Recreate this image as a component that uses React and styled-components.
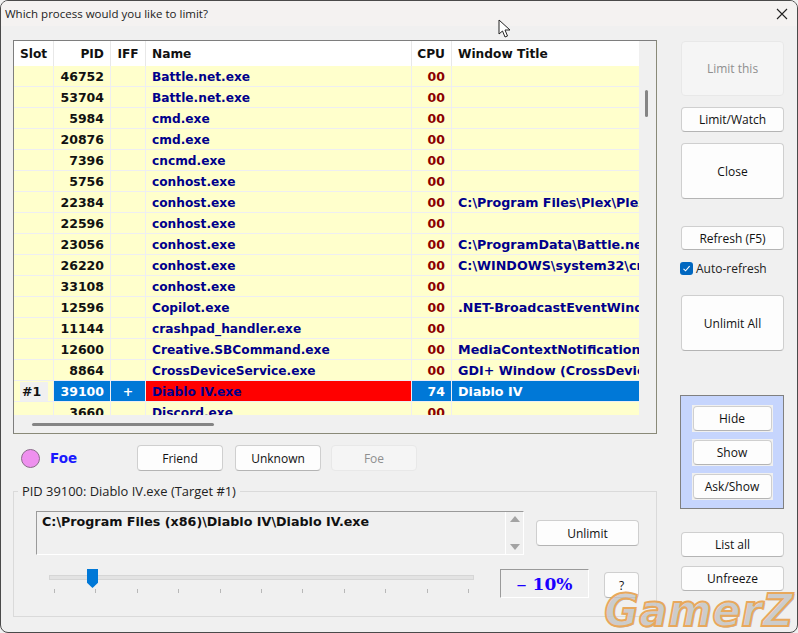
import React from 'react'
import styled, { createGlobalStyle } from 'styled-components'

const Global = createGlobalStyle`
    html, body {
        margin: 0;
        padding: 0;
        background: #f0f0f0;
    }
    body {
        font-family: "DejaVu Sans", sans-serif;
    }
`

const Window = styled.div`
    position: relative;
    width: 798px;
    height: 633px;
    box-sizing: border-box;
    overflow: hidden;
    background: #f0f0f0;
    border: 1px solid #4a4a4a;
    border-radius: 8px;
`

const TitleBar = styled.header`
    height: 25px;
    display: flex;
    align-items: center;
    justify-content: space-between;
    padding: 0 9px 0 4px;
    background: #f4f2f1;
    font: 11.5px "Open Sans", sans-serif;
    color: #222;
`

const Main = styled.div`
    display: grid;
    grid-template-columns: 644px 103px;
    column-gap: 24px;
    padding: 14px 0 0 12px;
`

const LeftColumn = styled.div`
    display: flex;
    flex-direction: column;
`

const RightColumn = styled.div`
    display: flex;
    flex-direction: column;
    padding-top: 1px;
`

const ListBox = styled.div`
    width: 644px;
    height: 394px;
    box-sizing: border-box;
    border: 1px solid;
    border-color: #7e7e7e #8a8a78 #8a8a78 #7e7e7e;
    background: #f0f0f0;
    display: grid;
    grid-template-columns: 625px 17px;
    grid-template-rows: 374px 18px;
`

const ListClip = styled.div`
    overflow: hidden;
`

const columns = '40px 57px 35px 266px 40px 187px'

const HeaderRow = styled.div`
    display: grid;
    grid-template-columns: ${columns};
    height: 25px;
    background: #fff;
`

const HeadCell = styled.div`
    display: flex;
    align-items: center;
    justify-content: ${p => p.$align === 'right' ? 'flex-end' : p.$align === 'center' ? 'center' : 'flex-start'};
    padding: 0 6px;
    box-sizing: border-box;
    font-size: 12.2px;
    font-weight: 700;
    color: #111;
    border-right: 1px solid #e8e8e8;
    &:last-child { border-right: none; }
`

const Row = styled.div`
    display: grid;
    grid-template-columns: ${columns};
    height: 21px;
    box-sizing: border-box;
    background: #ffffcc;
    border-bottom: 1px solid #eeeef2;
`

const Cell = styled.div`
    display: flex;
    align-items: center;
    justify-content: ${p => p.$align === 'right' ? 'flex-end' : p.$align === 'center' ? 'center' : 'flex-start'};
    padding: 1px 6px 0;
    box-sizing: border-box;
    font-size: ${p => p.$size || 12.5}px;
    font-weight: 700;
    white-space: nowrap;
    overflow: hidden;
    color: ${p => p.$color || '#00008b'};
    background: ${p => p.$bg || 'transparent'};
    border-right: 1px solid #eeeef2;
    &:last-child { border-right: none; }
`

const SlotTag = styled.span`
    padding: 0 7px 0 2px;
    line-height: 20px;
    background: #f0f0f0;
`

const VerticalBand = styled.div`
    position: relative;
`

const VerticalThumb = styled.div`
    position: absolute;
    left: 6px;
    top: 49px;
    width: 3px;
    height: 27px;
    border-radius: 2px;
    background: #858585;
`

const HorizontalBand = styled.div`
    grid-column: 1 / 3;
    padding: 8px 0 0 18px;
`

const HorizontalThumb = styled.div`
    width: 182px;
    height: 3px;
    border-radius: 2px;
    background: #858585;
`

const IffRow = styled.div`
    display: flex;
    align-items: center;
    height: 26px;
    margin-top: 11px;
    padding-left: 8px;
`

const Dot = styled.span`
    width: 19px;
    height: 19px;
    border-radius: 50%;
    background: #ee90ee;
    border: 1px solid #8a6a8a;
    box-sizing: border-box;
`

const IffLabel = styled.span`
    width: 97px;
    padding-left: 10px;
    box-sizing: border-box;
    font-size: 13.5px;
    font-weight: 700;
    color: #1a1aff;
`

const Button = styled.button`
    width: ${p => p.$width || 103}px;
    height: ${p => p.$height || 26}px;
    margin: ${p => p.$margin || 0};
    padding: 0;
    box-sizing: border-box;
    flex-shrink: 0;
    background: ${p => p.disabled ? '#f5f5f5' : '#fdfdfd'};
    border: 1px solid ${p => p.disabled ? '#e8e8e8' : '#cfcfcf'};
    border-bottom-color: ${p => p.disabled ? '#e8e8e8' : '#b4b4b4'};
    border-radius: 4px;
    font: 12px "Open Sans", sans-serif;
    color: ${p => p.disabled ? '#8f8f8f' : '#111'};
`

const Group = styled.fieldset`
    margin: 11px 0 0;
    padding: 0 0 0 22px;
    width: 644px;
    height: 135px;
    box-sizing: border-box;
    border: 1px solid #dadada;
    min-width: 0;
`

const Legend = styled.legend`
    margin-left: -18px;
    padding: 0 4px;
    font: 12.9px "Open Sans", sans-serif;
    color: #222;
`

const PathRow = styled.div`
    display: flex;
    align-items: center;
    margin-top: 11px;
`

const PathBox = styled.div`
    width: 488px;
    height: 44px;
    box-sizing: border-box;
    display: flex;
    justify-content: space-between;
    border: 1px solid;
    border-color: #9a9a9a #fff #fff #9a9a9a;
    padding: 0 0 0 5px;
    font-size: 12.7px;
    font-weight: 700;
    color: #111;
`

const PathText = styled.span`
    padding-top: 2px;
`

const Spinner = styled.div`
    width: 17px;
    display: flex;
    flex-direction: column;
    align-items: center;
    justify-content: space-between;
    padding: 4px 0;
    border-left: 1px solid #fff;
`

const Arrow = styled.span`
    width: 0;
    height: 0;
    border-left: 5px solid transparent;
    border-right: 5px solid transparent;
    ${p => p.$down ? 'border-top: 6px solid #a3a3a3;' : 'border-bottom: 6px solid #a3a3a3;'}
`

const SliderRow = styled.div`
    display: flex;
    align-items: flex-start;
    margin-top: 14px;
    padding-left: 13px;
`

const Slider = styled.div`
    position: relative;
    width: 425px;
    height: 29px;
    margin-right: 26px;
`

const Track = styled.div`
    height: 3px;
    margin-top: 6px;
    background: #e3e3e3;
    border: 1px solid #d6d6d6;
`

const Thumb = styled.div`
    position: absolute;
    left: 38px;
    top: 0;
    width: 11px;
    height: 19px;
    background: #0078d7;
    clip-path: polygon(0 0, 100% 0, 100% 72%, 50% 100%, 0 72%);
`

const Ticks = styled.div`
    display: flex;
    justify-content: space-between;
    margin: 9px 5px 0;
`

const Tick = styled.span`
    width: 1px;
    height: 4px;
    background: #b8b8b8;
`

const Percent = styled.div`
    width: 89px;
    height: 29px;
    box-sizing: border-box;
    display: flex;
    align-items: center;
    justify-content: center;
    gap: 6px;
    padding-top: 1px;
    border: 1px solid;
    border-color: #9a9a9a #fff #fff #9a9a9a;
    font: 700 17px "DejaVu Serif", serif;
    color: #1a00ff;
`

const Minus = styled.span`
    font-size: 20px;
    font-weight: 400;
`

const Checkline = styled.label`
    display: flex;
    align-items: center;
    gap: 3px;
    height: 14px;
    margin: 11px 0 0 -1px;
    font: 12px "Open Sans", sans-serif;
    color: #222;
`

const CheckBox = styled.span`
    width: 13px;
    height: 13px;
    border-radius: 3px;
    background: #0067c0;
    display: flex;
    align-items: center;
    justify-content: center;
`

const WindowPanel = styled.div`
    width: 104px;
    height: 114px;
    margin: 44px 0 0 -1px;
    box-sizing: border-box;
    background: #c6d5fd;
    border: 1px solid #808080;
    display: flex;
    flex-direction: column;
    align-items: center;
    gap: 7px;
    padding-top: 9px;
`

const PanelCell = styled.div`
    padding: 1px;
    background: #f0f0f0;
    display: flex;
`

const Watermark = styled.div`
    position: absolute;
    right: 3px;
    bottom: -5px;
    font: italic 700 45px "DejaVu Sans", sans-serif;
    letter-spacing: 0.5px;
    color: rgba(228, 228, 228, 0.6);
    -webkit-text-stroke: 2px #e8a85c;
    text-shadow: 1px 1px 0 rgba(110, 110, 110, 0.55);
    transform: scaleX(0.935);
    transform-origin: right bottom;
    pointer-events: none;
`

const Cursor = styled.svg`
    position: absolute;
    left: 497px;
    top: 18px;
`

const rows = [
    ['46752', 'Battle.net.exe', ''],
    ['53704', 'Battle.net.exe', ''],
    ['5984', 'cmd.exe', ''],
    ['20876', 'cmd.exe', ''],
    ['7396', 'cncmd.exe', ''],
    ['5756', 'conhost.exe', ''],
    ['22384', 'conhost.exe', 'C:\\Program Files\\Plex\\Plex Media Server'],
    ['22596', 'conhost.exe', ''],
    ['23056', 'conhost.exe', 'C:\\ProgramData\\Battle.net\\Agent'],
    ['26220', 'conhost.exe', 'C:\\WINDOWS\\system32\\cmd.exe'],
    ['33108', 'conhost.exe', ''],
    ['12596', 'Copilot.exe', '.NET-BroadcastEventWindow'],
    ['11144', 'crashpad_handler.exe', ''],
    ['12600', 'Creative.SBCommand.exe', 'MediaContextNotificationWindow'],
    ['8864', 'CrossDeviceService.exe', 'GDI+ Window (CrossDeviceService)'],
]

function ProcessRow({ pid, name, title }) {
    return (
        <Row>
            <Cell />
            <Cell $align="right" $color="#111">{pid}</Cell>
            <Cell />
            <Cell $size={12.2}>{name}</Cell>
            <Cell $align="right" $color="#8b0000">00</Cell>
            <Cell $size={12.7}>{title}</Cell>
        </Row>
    )
}

export default function App() {
    return (
        <Window>
            <Global />
            <TitleBar>
                Which process would you like to limit?
                <svg width="12" height="12" viewBox="0 0 12 12">
                    <path d="M1 1 L11 11 M11 1 L1 11" stroke="#222" strokeWidth="1.1" fill="none" />
                </svg>
            </TitleBar>
            <Main>
                <LeftColumn>
                    <ListBox>
                        <ListClip>
                            <HeaderRow>
                                <HeadCell>Slot</HeadCell>
                                <HeadCell $align="right">PID</HeadCell>
                                <HeadCell $align="center">IFF</HeadCell>
                                <HeadCell>Name</HeadCell>
                                <HeadCell $align="right">CPU</HeadCell>
                                <HeadCell>Window Title</HeadCell>
                            </HeaderRow>
                            {rows.map(r => (
                                <ProcessRow key={r[0]} pid={r[0]} name={r[1]} title={r[2]} />
                            ))}
                            <Row>
                                <Cell $color="#111"><SlotTag>#1</SlotTag></Cell>
                                <Cell $align="right" $color="#fff" $bg="#0078d7">39100</Cell>
                                <Cell $align="center" $color="#fff" $bg="#0078d7">+</Cell>
                                <Cell $size={12.2} $bg="#ff0000">Diablo IV.exe</Cell>
                                <Cell $align="right" $color="#fff" $bg="#0078d7">74</Cell>
                                <Cell $size={12.7} $color="#fff" $bg="#0078d7">Diablo IV</Cell>
                            </Row>
                            <ProcessRow pid="3660" name="Discord.exe" title="" />
                        </ListClip>
                        <VerticalBand>
                            <VerticalThumb />
                        </VerticalBand>
                        <HorizontalBand>
                            <HorizontalThumb />
                        </HorizontalBand>
                    </ListBox>
                    <IffRow>
                        <Dot />
                        <IffLabel>Foe</IffLabel>
                        <Button $width={86}>Friend</Button>
                        <Button $width={86} $margin="0 0 0 12px">Unknown</Button>
                        <Button $width={86} $margin="0 0 0 10px" disabled>Foe</Button>
                    </IffRow>
                    <Group>
                        <Legend>PID 39100: Diablo IV.exe (Target #1)</Legend>
                        <PathRow>
                            <PathBox>
                                <PathText>C:\Program Files (x86)\Diablo IV\Diablo IV.exe</PathText>
                                <Spinner>
                                    <Arrow />
                                    <Arrow $down />
                                </Spinner>
                            </PathBox>
                            <Button $margin="0 0 0 12px">Unlimit</Button>
                        </PathRow>
                        <SliderRow>
                            <Slider>
                                <Track />
                                <Thumb />
                                <Ticks>
                                    {Array.from({ length: 11 }, (_, i) => <Tick key={i} />)}
                                </Ticks>
                            </Slider>
                            <Percent><Minus>–</Minus><span>10%</span></Percent>
                            <Button $width={35} $margin="3px 0 0 15px">?</Button>
                        </SliderRow>
                    </Group>
                </LeftColumn>
                <RightColumn>
                    <Button $height={55} disabled>Limit this</Button>
                    <Button $height={25} $margin="11px 0 0">Limit/Watch</Button>
                    <Button $height={56} $margin="11px 0 0">Close</Button>
                    <Button $height={24} $margin="27px 0 0">Refresh (F5)</Button>
                    <Checkline>
                        <CheckBox>
                            <svg width="9" height="9" viewBox="0 0 9 9">
                                <path d="M1.5 4.8 L3.6 6.8 L7.6 2.2" stroke="#fff" strokeWidth="1.1" fill="none" />
                            </svg>
                        </CheckBox>
                        Auto-refresh
                    </Checkline>
                    <Button $height={56} $margin="20px 0 0">Unlimit All</Button>
                    <WindowPanel>
                        <PanelCell><Button $width={79} $height={25}>Hide</Button></PanelCell>
                        <PanelCell><Button $width={79} $height={25}>Show</Button></PanelCell>
                        <PanelCell><Button $width={79} $height={25}>Ask/Show</Button></PanelCell>
                    </WindowPanel>
                    <Button $height={25} $margin="23px 0 0">List all</Button>
                    <Button $height={25} $margin="9px 0 0">Unfreeze</Button>
                </RightColumn>
            </Main>
            <Watermark>GamerZ</Watermark>
            <Cursor width="14" height="20" viewBox="0 0 14 20">
                <path d="M1 1 L1 15 L4.5 12 L7 18 L9.5 17 L7 11 L12 11 Z" fill="#fff" stroke="#222" strokeWidth="1" />
            </Cursor>
        </Window>
    )
}
